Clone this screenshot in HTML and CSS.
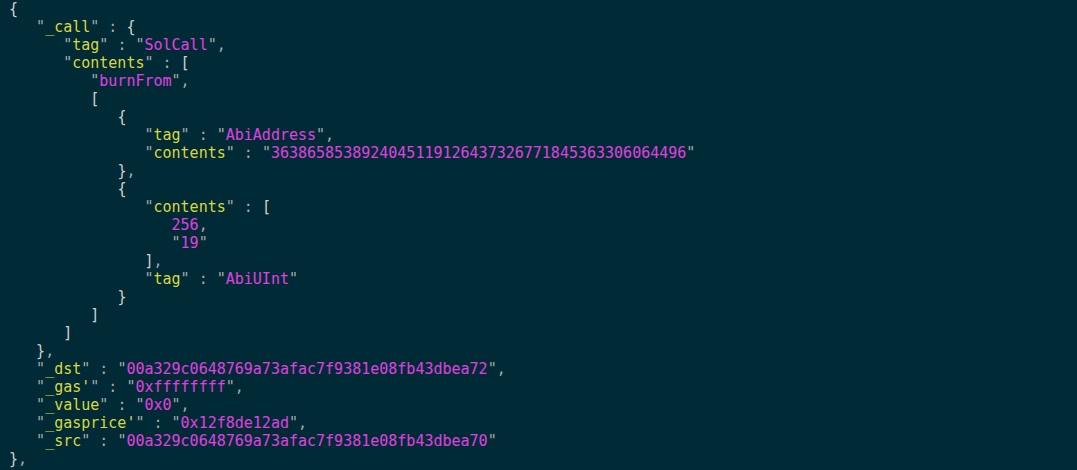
FILE: index.html
```html
<!DOCTYPE html>
<html>
<head>
<meta charset="utf-8">
<link rel="stylesheet" href="styles.css">
</head>
<body>
<pre class="json"><span class="p">{</span>
   <span class="q">"</span><span class="k">_call</span><span class="q">"</span> <span class="q">:</span> <span class="p">{</span>
      <span class="q">"</span><span class="k">tag</span><span class="q">"</span> <span class="q">:</span> <span class="q">"</span><span class="s">SolCall</span><span class="q">"</span><span class="q">,</span>
      <span class="q">"</span><span class="k">contents</span><span class="q">"</span> <span class="q">:</span> <span class="p">[</span>
         <span class="q">"</span><span class="s">burnFrom</span><span class="q">"</span><span class="q">,</span>
         <span class="p">[</span>
            <span class="p">{</span>
               <span class="q">"</span><span class="k">tag</span><span class="q">"</span> <span class="q">:</span> <span class="q">"</span><span class="s">AbiAddress</span><span class="q">"</span><span class="q">,</span>
               <span class="q">"</span><span class="k">contents</span><span class="q">"</span> <span class="q">:</span> <span class="q">"</span><span class="s">3638658538924045119126437326771845363306064496</span><span class="q">"</span>
            <span class="p">}</span><span class="q">,</span>
            <span class="p">{</span>
               <span class="q">"</span><span class="k">contents</span><span class="q">"</span> <span class="q">:</span> <span class="p">[</span>
                  <span class="s">256</span><span class="q">,</span>
                  <span class="q">"</span><span class="s">19</span><span class="q">"</span>
               <span class="p">]</span><span class="q">,</span>
               <span class="q">"</span><span class="k">tag</span><span class="q">"</span> <span class="q">:</span> <span class="q">"</span><span class="s">AbiUInt</span><span class="q">"</span>
            <span class="p">}</span>
         <span class="p">]</span>
      <span class="p">]</span>
   <span class="p">}</span><span class="q">,</span>
   <span class="q">"</span><span class="k">_dst</span><span class="q">"</span> <span class="q">:</span> <span class="q">"</span><span class="s">00a329c0648769a73afac7f9381e08fb43dbea72</span><span class="q">"</span><span class="q">,</span>
   <span class="q">"</span><span class="k">_gas'</span><span class="q">"</span> <span class="q">:</span> <span class="q">"</span><span class="s">0xffffffff</span><span class="q">"</span><span class="q">,</span>
   <span class="q">"</span><span class="k">_value</span><span class="q">"</span> <span class="q">:</span> <span class="q">"</span><span class="s">0x0</span><span class="q">"</span><span class="q">,</span>
   <span class="q">"</span><span class="k">_gasprice'</span><span class="q">"</span> <span class="q">:</span> <span class="q">"</span><span class="s">0x12f8de12ad</span><span class="q">"</span><span class="q">,</span>
   <span class="q">"</span><span class="k">_src</span><span class="q">"</span> <span class="q">:</span> <span class="q">"</span><span class="s">00a329c0648769a73afac7f9381e08fb43dbea70</span><span class="q">"</span>
<span class="p">}</span><span class="q">,</span></pre>
</body>
</html>
```
FILE: styles.css
```css
html, body {
  margin: 0;
  padding: 0;
  background: #002b36;
  height: 100%;
  overflow: hidden;
}
.json {
  margin: 0;
  padding: 0 0 0 9px;
  font-family: "DejaVu Sans Mono", monospace;
  font-size: 15px;
  line-height: 18px;
  color: #b0b0b0;
}
.p { color: #d0d0d0; }
.q { color: #a8a8a8; }
.k { color: #d8d83c; }
.s { color: #e040e0; }
```
